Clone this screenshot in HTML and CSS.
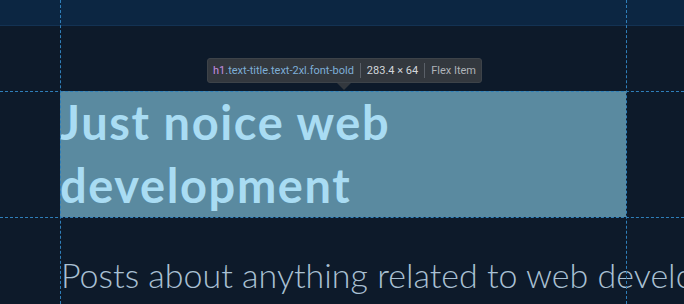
FILE: index.html
```html
<!DOCTYPE html>
<html>
<head>
<meta charset="utf-8">
<link rel="stylesheet" href="styles.css">
</head>
<body>
<header class="topbar"></header>
<main class="content">
  <h1 class="title">Just noice web development</h1>
  <p class="subtitle">Posts about anything related to web development</p>
</main>
<div class="guide guide-v guide-left"></div>
<div class="guide guide-v guide-right"></div>
<div class="guide guide-h guide-top"></div>
<div class="guide guide-h guide-bottom"></div>
<div class="tooltip">
  <span class="tag">h1</span><span class="cls">.text-title.text-2xl.font-bold</span>
  <span class="sep"></span>
  <span class="dims">283.4 × 64</span>
  <span class="sep"></span>
  <span class="role">Flex Item</span>
  <span class="arrow"></span>
</div>
</body>
</html>
```
FILE: styles.css
```css
html, body {
  margin: 0;
  padding: 0;
  width: 684px;
  height: 304px;
  overflow: hidden;
  background: #0d1a2a;
  font-family: "Lato", "Open Sans", sans-serif;
}
body { position: relative; }
.topbar {
  height: 25px;
  background: #0c2642;
  border-bottom: 1px solid #133253;
}
.content {
  width: 566px;
  margin-left: 60px;
  padding-top: 65px;
}
.title {
  margin: 0;
  height: 126px;
  background: #5a8aa0;
  color: #a9dcf3;
  font-family: "Lato", sans-serif;
  font-weight: 700;
  font-size: 47px;
  line-height: 63px;
  letter-spacing: 1.6px;
}
.subtitle {
  margin: 38px 0 0 1px;
  white-space: nowrap;
  color: #a9c0d3;
  font-family: "Lato", sans-serif;
  font-weight: 300;
  font-size: 34px;
  line-height: 40px;
}
.guide { position: absolute; }
.guide-v {
  top: 0;
  bottom: 0;
  width: 0;
  border-left: 1px dashed #2f7fba;
}
.guide-left { left: 60px; }
.guide-right { left: 626px; }
.guide-h {
  left: 0;
  right: 0;
  height: 0;
  border-top: 1px dashed #2f7fba;
}
.guide-top { top: 91px; }
.guide-bottom { top: 217px; }
.tooltip {
  position: absolute;
  left: 207px;
  top: 58px;
  height: 25px;
  padding: 0 5px 0 5px;
  box-sizing: border-box;
  display: flex;
  align-items: center;
  gap: 6px;
  background: #33383e;
  border: 1px solid #3d4349;
  border-radius: 3px;
  font-family: "Roboto", "Open Sans", sans-serif;
  font-size: 11px;
  white-space: nowrap;
}
.tag { color: #c48de0; }
.cls { color: #7eaed6; margin-left: -6px; }
.sep {
  width: 1px;
  height: 15px;
  background: #5a6068;
}
.dims { color: #d2d6da; }
.role { color: #aeb3b8; }
.arrow {
  position: absolute;
  left: 129px;
  top: 24px;
  width: 0;
  height: 0;
  border-left: 7px solid transparent;
  border-right: 7px solid transparent;
  border-top: 7px solid #33383e;
}
```
